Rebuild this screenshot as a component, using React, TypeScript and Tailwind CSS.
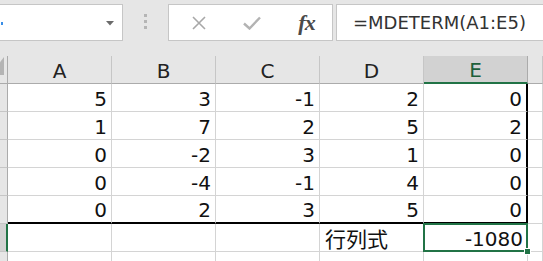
import React from 'react';

const FONT = "font-['DejaVu_Sans','Noto_Sans_CJK_SC',sans-serif]";

const COLS = ['A', 'B', 'C', 'D', 'E', ''];

const DATA: (string | number)[][] = [
    [5, 3, -1, 2, 0],
    [1, 7, 2, 5, 2],
    [0, -2, 3, 1, 0],
    [0, -4, -1, 4, 0],
    [0, 2, 3, 5, 0],
];

const Cell: React.FC<{ row: number; col: number; children?: React.ReactNode }> = ({ row, col, children }) => {
    // thick black outline on right of E1:E5 and bottom of A5:E5
    const thickRight = col === 4 && row < 5;
    const thickBottom = row === 4 && col < 5;
    return (
        <div
            className={[
                'relative flex items-end justify-end h-[28px] px-[4px] text-[20px] leading-[23px] text-[#111] bg-white overflow-visible',
                thickRight ? 'border-r-2 border-r-black' : 'border-r border-r-[#d4d4d4]',
                thickBottom ? 'border-b-2 border-b-black' : 'border-b border-b-[#d4d4d4]',
            ].join(' ')}
        >
            {children}
        </div>
    );
};

const RowHead: React.FC<{ active?: boolean }> = ({ active }) => (
    <div
        className={
            active
                ? 'h-[28px] bg-[#d2d2d2] border-b border-b-[#c6c6c6] border-r-2 border-r-[#217346]'
                : 'h-[28px] bg-[#e6e6e6] border-b border-b-[#c6c6c6] border-r border-r-[#ababab]'
        }
    />
);

export default function App() {
    return (
        <div className={`w-[543px] h-[261px] overflow-hidden bg-white ${FONT}`}>
            {/* Formula bar */}
            <div className="flex h-[56px] pt-[4px] bg-[#e6e6e6]">
                <div className="relative ml-[-1px] w-[124px] h-[37px] bg-white border border-[#c6c6c6]">
                    <div className="absolute left-[1px] top-[17px] w-[2px] h-[3px] bg-[#3a8ee6]" />
                    <svg className="absolute left-[106px] top-[16px]" width="8" height="5" viewBox="0 0 8 5">
                        <polygon points="0,0 8,0 4,4.5" fill="#6b6b6b" />
                    </svg>
                </div>
                <div className="w-[45px] flex flex-col items-center pt-[10px] gap-[3px]">
                    <div className="w-[3px] h-[3px] bg-[#b5b5b5]" />
                    <div className="w-[3px] h-[3px] bg-[#b5b5b5]" />
                    <div className="w-[3px] h-[3px] bg-[#b5b5b5]" />
                </div>
                <div className="w-[165px] h-[37px] bg-white border border-[#c6c6c6] flex items-center">
                    <div className="w-[54px] flex justify-center ml-[4px]">
                        <svg width="14" height="14" viewBox="0 0 14 14">
                            <path d="M1 1 L13 13 M13 1 L1 13" stroke="#a8a8a8" strokeWidth="1.6" />
                        </svg>
                    </div>
                    <div className="w-[54px] flex justify-center">
                        <svg width="18" height="14" viewBox="0 0 18 14">
                            <path d="M1 7.5 L6.5 12.5 L17 1.5" stroke="#b3b3b3" strokeWidth="2.4" fill="none" />
                        </svg>
                    </div>
                    <div className="w-[54px] flex justify-center pl-[2px]">
                        <span className="font-['Liberation_Serif',serif] italic font-semibold text-[22px] leading-none text-[#4a4a4a] tracking-[-1px]">
                            fx
                        </span>
                    </div>
                </div>
                <div className="flex-1 ml-[3px] mr-[-4px] h-[37px] bg-white border border-[#c6c6c6] flex items-center pl-[16px]">
                    <span className="text-[18px] leading-none text-[#333] pt-[1px]">=MDETERM(A1:E5)</span>
                </div>
            </div>

            {/* Sheet grid */}
            <div className="grid grid-cols-[8px_104px_104px_104px_104px_104px_1fr]">
                {/* header row */}
                <div className="relative h-[28px] bg-[#e6e6e6] border-r border-r-[#ababab] border-b border-b-[#ababab]">
                    <svg className="absolute left-0 top-[1px]" width="4" height="18" viewBox="0 0 4 18">
                        <polygon points="4,0 4,18 -10,18" fill="#b4b4b4" />
                    </svg>
                </div>
                {COLS.map((c, i) => (
                    <div
                        key={c + i}
                        className={
                            c === 'E'
                                ? 'h-[28px] flex items-center justify-center pt-[2px] text-[20px] leading-none text-[#1d5f3a] bg-[#d2d2d2] border-r border-r-[#ababab] border-b-2 border-b-[#217346]'
                                : 'h-[28px] flex items-center justify-center pt-[2px] text-[20px] leading-none text-[#222] bg-[#e6e6e6] border-r border-r-[#c6c6c6] border-b border-b-[#ababab]'
                        }
                    >
                        {c}
                    </div>
                ))}

                {/* rows 1-5 */}
                {DATA.map((row, r) => (
                    <React.Fragment key={r}>
                        <RowHead />
                        {row.map((v, c) => (
                            <Cell key={c} row={r} col={c}>
                                {v}
                            </Cell>
                        ))}
                        <Cell row={r} col={5} />
                    </React.Fragment>
                ))}

                {/* row 6 */}
                <RowHead active />
                <Cell row={5} col={0} />
                <Cell row={5} col={1} />
                <Cell row={5} col={2} />
                <div className="h-[28px] flex items-end px-[5px] text-[21px] leading-[25px] text-[#111] bg-white border-r border-r-[#d4d4d4] border-b border-b-[#d4d4d4] font-['Noto_Sans_CJK_SC',sans-serif]">
                    行列式
                </div>
                <Cell row={5} col={4}>
                    -1080
                    <div className="absolute z-10 inset-[-1px] border-2 border-[#217346] pointer-events-none" />
                    <div className="absolute z-20 right-[-4px] bottom-[-4px] w-[7px] h-[7px] bg-[#217346] border border-white" />
                </Cell>
                <Cell row={5} col={5} />

                {/* row 7 (partial) */}
                <RowHead />
                {[0, 1, 2, 3, 4, 5].map((c) => (
                    <Cell key={c} row={6} col={c} />
                ))}
            </div>
        </div>
    );
}
